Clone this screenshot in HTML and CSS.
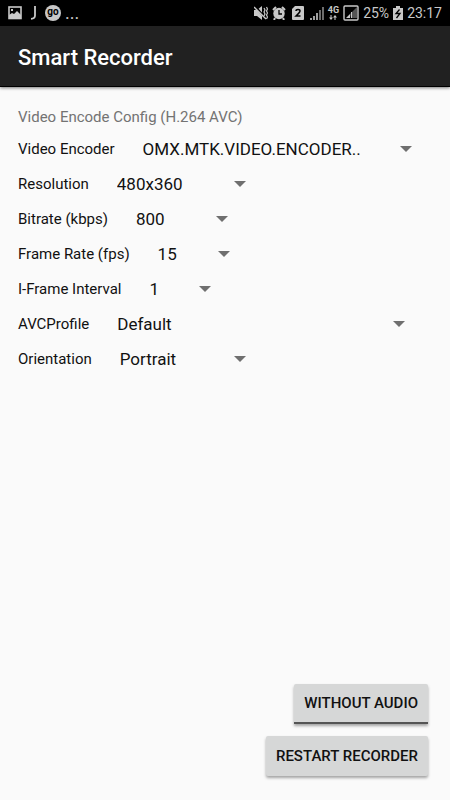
FILE: index.html
```
<!DOCTYPE html>
<html lang="en">
<head>
    <meta charset="UTF-8">
    <meta name="viewport" content="width=device-width, initial-scale=1">
    <title>Smart Recorder</title>
    <link rel="stylesheet" href="styles.css">
</head>
<body>
    <!-- status bar -->
    <div class="status-bar">
        <div class="notifications">
            <svg width="14" height="14" viewBox="0 0 14 14">
                <rect x="1" y="1" width="12" height="11.5" fill="none" stroke="#c8c8c8" stroke-width="1.6"/>
                <path d="M1 12V9L4 7l2 1 3-3 4 4v3z" fill="#c8c8c8"/>
                <path d="M3 3h2v2H3z" fill="#c8c8c8"/>
            </svg>
            <svg class="icon-j" width="7" height="14" viewBox="0 0 7 14">
                <path d="M5 0v9.5Q5 12.5 1 12.8" fill="none" stroke="#c8c8c8" stroke-width="1.8"/>
            </svg>
            <span class="go">go</span>
            <span class="more">...</span>
        </div>
        <div class="system">
            <svg width="14" height="14" viewBox="0 0 14 14">
                <path d="M0 4h3l5-4v14l-5-4H0z" fill="#c8c8c8"/>
                <path d="M1 0l11 13" stroke="#000" stroke-width="2"/>
                <path d="M0 1l12 12" stroke="#c8c8c8" stroke-width="1.4"/>
                <path d="M10 2l1 2-1 2 1 2-1 2M12.500 1l1 2-1 2 1 2-1 2 1 2-1 2" fill="none" stroke="#c8c8c8" stroke-width="1.2"/>
            </svg>
            <svg width="14" height="14" viewBox="0 0 14 14">
                <path d="M1 4l3-3M13 4l-3-3M3 12l-1 2M11 12l1 2" stroke="#c8c8c8" stroke-width="2"/>
                <circle cx="7" cy="7.5" r="5.7" fill="#c8c8c8"/>
                <path d="M7 4v4h3" fill="none" stroke="#000" stroke-width="1.3"/>
            </svg>
            <svg class="icon-sim" width="12" height="14" viewBox="0 0 12 14">
                <path d="M3 0h8q1 0 1 1v12q0 1-1 1H1q-1 0-1-1V3z" fill="#c8c8c8"/>
                <path d="M4 5q0-1.500 2-1.500T8 5q0 1.200-4 5h4.500" fill="none" stroke="#000" stroke-width="1.500"/>
            </svg>
            <svg width="14" height="14" viewBox="0 0 14 14">
                <path d="M1 12v2M4 10v4M7 7v7" stroke="#c8c8c8" stroke-width="1.600"/>
                <path d="M10 4v10M13 1v13" stroke="#888" stroke-width="1.600"/>
            </svg>
            <div class="network">
                <span>4G</span>
                <svg width="8" height="5" viewBox="0 0 8 5">
                    <path d="M2 5L0 2.500h1.500V0h1v2.500H4zM6 0l2 2.500H6.500V5h-1V2.500H4z" fill="#c8c8c8"/>
                </svg>
            </div>
            <svg width="16" height="16" viewBox="0 0 16 16">
                <rect x="1" y="1" width="14" height="14" rx="1" fill="none" stroke="#c8c8c8" stroke-width="1.400"/>
                <path d="M3 13l4-4v4z" fill="#c8c8c8"/>
                <path d="M7 9l7-7v11H8z" fill="#555"/>
                <path d="M8.500 7v6" stroke="#c8c8c8"/>
            </svg>
            <span class="battery-level">25%</span>
            <svg width="10" height="14" viewBox="0 0 10 14">
                <path d="M3 0h4v2h3v12H0V2h3z" fill="#c8c8c8"/>
                <path d="M6.500 3.500L3 7.500h4l-3.500 4.500" fill="none" stroke="#000" stroke-width="1.300"/>
            </svg>
            <span class="clock">23:17</span>
        </div>
    </div>

    <header class="app-bar">
        <h1>Smart Recorder</h1>
    </header>

    <main>
        <h2>Video Encode Config (H.264 AVC)</h2>
        <div class="row">
            <label for="encoder">Video Encoder</label>
            <div class="spinner spinner-encoder">
                <select id="encoder">
                    <option>OMX.MTK.VIDEO.ENCODER..</option>
                </select>
            </div>
        </div>
        <div class="row">
            <label for="resolution">Resolution</label>
            <div class="spinner spinner-resolution">
                <select id="resolution">
                    <option>480x360</option>
                </select>
            </div>
        </div>
        <div class="row">
            <label for="bitrate">Bitrate (kbps)</label>
            <div class="spinner spinner-bitrate">
                <select id="bitrate">
                    <option>800</option>
                </select>
            </div>
        </div>
        <div class="row">
            <label for="framerate">Frame Rate (fps)</label>
            <div class="spinner spinner-framerate">
                <select id="framerate">
                    <option>15</option>
                </select>
            </div>
        </div>
        <div class="row">
            <label for="interval">I-Frame Interval</label>
            <div class="spinner spinner-interval">
                <select id="interval">
                    <option>1</option>
                </select>
            </div>
        </div>
        <div class="row">
            <label for="profile">AVCProfile</label>
            <div class="spinner spinner-profile">
                <select id="profile">
                    <option>Default</option>
                </select>
            </div>
        </div>
        <div class="row">
            <label for="orientation">Orientation</label>
            <div class="spinner spinner-orientation">
                <select id="orientation">
                    <option>Portrait</option>
                </select>
            </div>
        </div>
    </main>

    <footer>
        <button type="button" class="btn btn-toggle">WITHOUT AUDIO</button>
        <button type="button" class="btn">RESTART RECORDER</button>
    </footer>
</body>
</html>
```
FILE: styles.css
```
* {
    box-sizing: border-box;
}

body {
    margin: 0;
    min-height: 100vh;
    display: flex;
    flex-direction: column;
    background-color: #fafafa;
    color: #111;
    font-family: Roboto, sans-serif;
}

/* status bar */
.status-bar {
    display: flex;
    justify-content: space-between;
    height: 26px;
    padding: 0 8px;
    background-color: #000;
    color: #c8c8c8;
}

.notifications,
.system {
    display: flex;
    align-items: center;
}

.notifications {
    gap: 8px;
}

.go {
    width: 16px;
    height: 16px;
    border-radius: 50%;
    background-color: #c8c8c8;
    color: #000;
    font-size: 10px;
    line-height: 14px;
    font-weight: 700;
    text-align: center;
}

.more {
    margin-left: -4px;
    font-size: 18px;
    line-height: 24px;
}

.system {
    gap: 4px;
}

.icon-sim {
    margin: 0 2px;
}

.network {
    display: flex;
    flex-direction: column;
    align-items: center;
    font-size: 9px;
    line-height: 9px;
    font-weight: 700;
}

.battery-level,
.clock {
    font-size: 14px;
    line-height: 26px;
}

/* title */
.app-bar {
    display: flex;
    align-items: center;
    height: 61px;
    padding: 3px 18px 0;
    background-color: #212121;
    border-bottom: 1px solid #000;
    box-shadow: 0 1px 3px rgba(0, 0, 0, 0.5);
}

h1 {
    margin: 0;
    color: #fff;
    font-size: 22px;
    font-weight: 500;
}

/* config list */
main {
    flex: 1;
    padding: 17px 18px;
}

h2 {
    margin: 0;
    color: #737373;
    font-size: 15px;
    font-weight: 400;
    line-height: 27px;
}

.row {
    display: flex;
    align-items: center;
    gap: 28px;
    height: 35px;
}

label {
    font-size: 15px;
    line-height: 20px;
}

.spinner {
    position: relative;
}

.spinner::after {
    content: "";
    position: absolute;
    top: 12px;
    right: 0;
    border: 6px solid transparent;
    border-top-color: #6f6f6f;
    border-bottom: 0;
    pointer-events: none;
}

select {
    appearance: none;
    display: block;
    width: 100%;
    height: 30px;
    padding: 0;
    border: none;
    background: none;
    color: #111;
    font-family: inherit;
    font-size: 17px;
}

.spinner-encoder {
    width: 269px;
}

.spinner-resolution {
    width: 129px;
}

.spinner-bitrate {
    width: 92px;
}

.spinner-framerate {
    width: 72px;
}

.spinner-interval {
    width: 61px;
}

.spinner-profile {
    width: 288px;
}

.spinner-orientation {
    width: 126px;
}

/* buttons */
footer {
    display: flex;
    flex-direction: column;
    align-items: flex-end;
    gap: 12px;
    padding: 0 22px 24px;
}

.btn {
    height: 40px;
    padding: 0 10px;
    border: none;
    border-radius: 2px;
    background-color: #d6d7d7;
    color: #111;
    font-family: inherit;
    font-size: 15px;
    font-weight: 500;
    box-shadow: 0 2px 3px rgba(0, 0, 0, 0.35);
}

.btn-toggle {
    border-bottom: 2px solid #555;
    border-radius: 2px 2px 0 0;
}
```
